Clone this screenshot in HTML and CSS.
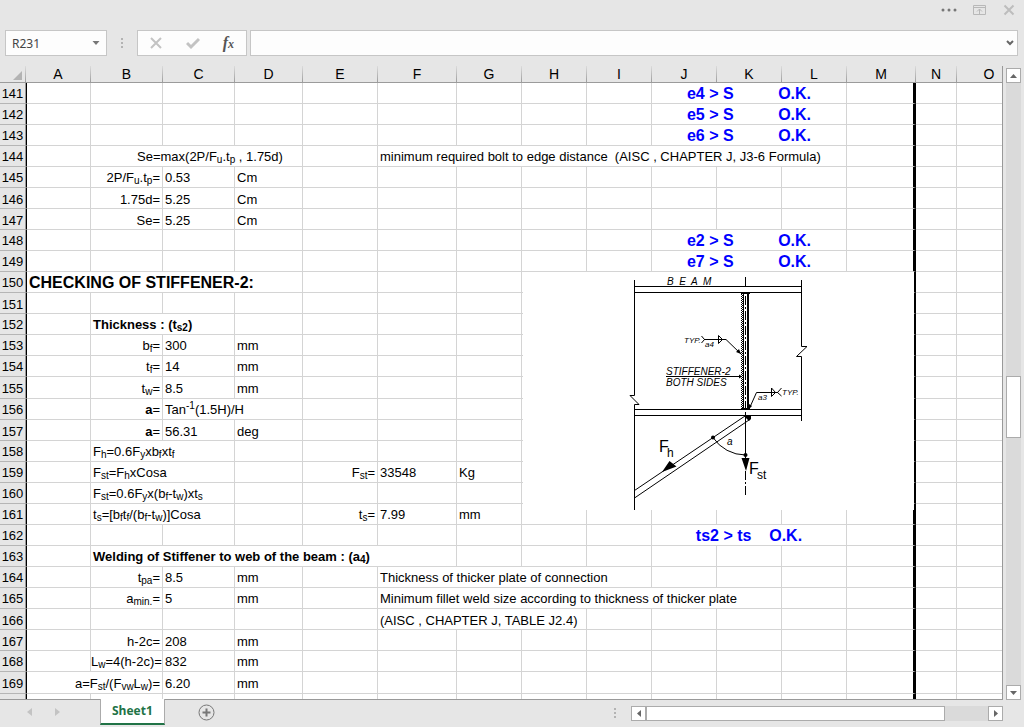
FILE: index.html
```html
<!DOCTYPE html>
<html lang="en">
<head>
    <meta charset="UTF-8">
    <meta name="viewport" content="width=device-width, initial-scale=1.0">
    <title>Sheet1</title>
    <link rel="stylesheet" href="styles.css">
</head>
<body>
    <div class="app">
        <header class="titlebar">
            <button class="icon-btn" aria-label="More"><svg width="16" height="14"><g fill="#777"><circle cx="2" cy="7" r="1.5"/><circle cx="8" cy="7" r="1.5"/><circle cx="14" cy="7" r="1.5"/></g></svg></button>
            <button class="icon-btn" aria-label="Ribbon display options"><svg width="14" height="14" fill="none" stroke="#b8b8b8"><path d="M.5 2.5h12v9H.5zM1 4.5h11M6.5 11V6M4 8.5l2.5-2.5 2.5 2.5"/></svg></button>
            <button class="icon-btn" aria-label="Close"><svg width="12" height="14" fill="none" stroke="#bdbdbd" stroke-width="2"><path d="M1.5 2.5l9 9M10.5 2.5l-9 9"/></svg></button>
        </header>

        <div class="formula-bar">
            <div class="name-box">
                <input type="text" value="R231" aria-label="Name box">
                <button class="icon-btn" aria-label="Open name list"><svg width="8" height="5"><path d="M.5 0h7L4 4z" fill="#777"/></svg></button>
            </div>
            <svg class="grip" width="3" height="11" fill="#b3b3b3"><path d="M0 0h2v2H0zM0 4h2v2H0zM0 8h2v2H0z"/></svg>
            <div class="tools">
                <button class="icon-btn" aria-label="Cancel"><svg width="14" height="14" fill="none" stroke="#c3c3c3" stroke-width="2"><path d="M2 2l10 10M12 2L2 12"/></svg></button>
                <button class="icon-btn" aria-label="Enter"><svg width="14" height="14" fill="none" stroke="#c3c3c3" stroke-width="3"><path d="M1 7l4 4 8-8"/></svg></button>
                <button class="icon-btn fx" aria-label="Insert function">f<small>x</small></button>
            </div>
            <div class="formula">
                <input type="text" aria-label="Formula">
                <button class="icon-btn" aria-label="Expand formula bar"><svg width="8" height="6" fill="none" stroke="#666" stroke-width="2"><path d="M1 1l3 3 3-3"/></svg></button>
            </div>
        </div>

        <main class="workspace">
            <div class="sheet">
                <table>
                    <colgroup>
                        <col class="w26"><col class="w65"><col class="w72"><col class="w72"><col class="w68"><col class="w75"><col class="w79"><col class="w65"><col class="w65"><col class="w65"><col class="w65"><col class="w65"><col class="w65"><col class="w69"><col class="w41"><col class="w65">
                    </colgroup>
                    <thead>
                        <tr><th><svg width="9" height="9"><path d="M9 0v9H0z" fill="#b3b3b3"/></svg></th><th>A</th><th>B</th><th>C</th><th>D</th><th>E</th><th>F</th><th>G</th><th>H</th><th>I</th><th>J</th><th>K</th><th>L</th><th>M</th><th>N</th><th>O</th></tr>
                    </thead>
                    <tbody>
                        <tr><th>141</th><td></td><td></td><td></td><td></td><td></td><td></td><td></td><td></td><td></td><td colspan="3" class="result">e4 &gt; S          O.K.</td><td></td><td></td><td></td></tr>
                        <tr><th>142</th><td></td><td></td><td></td><td></td><td></td><td></td><td></td><td></td><td></td><td colspan="3" class="result">e5 &gt; S          O.K.</td><td></td><td></td><td></td></tr>
                        <tr><th>143</th><td></td><td></td><td></td><td></td><td></td><td></td><td></td><td></td><td></td><td colspan="3" class="result">e6 &gt; S          O.K.</td><td></td><td></td><td></td></tr>
                        <tr><th>144</th><td></td><td colspan="3" class="indent">Se=max(2P/F<sub>u</sub>.t<sub>p</sub> , 1.75d)</td><td></td><td colspan="7">minimum required bolt to edge distance  (AISC , CHAPTER J, J3-6 Formula)</td><td></td><td></td><td></td></tr>
                        <tr><th>145</th><td></td><td class="name">2P/F<sub>u</sub>.t<sub>p</sub>=</td><td>0.53</td><td>Cm</td><td></td><td></td><td></td><td></td><td></td><td></td><td></td><td></td><td></td><td></td><td></td></tr>
                        <tr class="low"><th>146</th><td></td><td class="name">1.75d=</td><td>5.25</td><td>Cm</td><td></td><td></td><td></td><td></td><td></td><td></td><td></td><td></td><td></td><td></td><td></td></tr>
                        <tr class="low"><th>147</th><td></td><td class="name">Se=</td><td>5.25</td><td>Cm</td><td></td><td></td><td></td><td></td><td></td><td></td><td></td><td></td><td></td><td></td><td></td></tr>
                        <tr><th>148</th><td></td><td></td><td></td><td></td><td></td><td></td><td></td><td></td><td></td><td colspan="3" class="result">e2 &gt; S          O.K.</td><td></td><td></td><td></td></tr>
                        <tr><th>149</th><td></td><td></td><td></td><td></td><td></td><td></td><td></td><td></td><td></td><td colspan="3" class="result">e7 &gt; S          O.K.</td><td></td><td></td><td></td></tr>
                        <tr>
                            <th>150</th><td colspan="4" class="heading">CHECKING OF STIFFENER-2:</td><td></td><td></td><td></td>
                            <td class="anchor">
                                <!-- Stiffener detail, floats over H150:M161 -->
                                <svg class="drawing" width="391" height="238" viewBox="0 0 391 238" role="img" aria-label="Stiffener detail">
                                    <g fill="none" stroke="#000">
                                        <path d="M111.5 8V123.5H107L116 132.5H111.5V238"/>
                                        <path d="M278.5 8V74.5H284L273.5 84.5H278.5V149"/>
                                        <path d="M111 14.5H279M111 20.5H279M111 137.5H279M111 143.5H279"/>
                                        <path d="M222.5 5V15"/>
                                        <path d="M222.5 24V136" stroke-dasharray="9 2 2 2"/>
                                        <path d="M222.5 140V188"/>
                                        <path d="M222.5 199V224" stroke-dasharray="9 2 2 2"/>
                                        <path d="M218 21.5H227M218 136.5H227"/>
                                        <path d="M218.5 22V136" stroke-dasharray="1 1"/>
                                        <path d="M219.5 23V136" stroke-dasharray="1 1"/>
                                        <path d="M220.5 21V137"/>
                                        <path d="M225 21V137" stroke-width="2"/>
                                        <path d="M178.5 64L181.5 67.5L178.5 71M181 67.5H203L218 82"/>
                                        <path d="M195.5 63.5V71.5L199.5 67.5z"/>
                                        <path d="M143 104.5H219"/>
                                        <path d="M227 135L233.5 120.5H255M258.5 116L254.5 120.5L258.5 124"/>
                                        <path d="M248.5 116V124.5L252.5 120.5z"/>
                                        <path d="M222 144L111.5 218.5M226 148L111.5 226"/>
                                        <path d="M190 165.5A39 39 0 0 0 222.5 183"/>
                                    </g>
                                    <path d="M139 200L146.5 189L153.5 194.5zM218.5 186H226.5L223 199zM218 82l-5-2 3-3zM219 104.5l-3-2v4zM226 137l0-5 3 2zM221 144h7v3l-2 2z"/>
                                    <circle cx="190" cy="165.5" r="2"/>
                                    <circle cx="222.5" cy="183" r="2"/>
                                    <g class="lettering">
                                        <text x="144" y="13">B  E  A  M</text>
                                        <text x="143" y="103">STIFFENER-2</text>
                                        <text x="143" y="114">BOTH SIDES</text>
                                        <g class="small">
                                            <text x="161" y="71">TYP.</text>
                                            <text x="182" y="75">a4</text>
                                            <text x="259" y="123">TYP.</text>
                                            <text x="235" y="128">a3</text>
                                        </g>
                                        <text x="204" y="173">a</text>
                                    </g>
                                    <g class="force">
                                        <text x="136" y="180">F</text><text x="144" y="185" class="index">h</text>
                                        <text x="226" y="202">F</text><text x="234" y="207" class="index">st</text>
                                    </g>
                                </svg>
                            </td>
                            <td></td><td></td><td></td><td></td><td></td><td></td><td></td>
                        </tr>
                        <tr class="low"><th>151</th><td></td><td></td><td></td><td></td><td></td><td></td><td></td><td></td><td></td><td></td><td></td><td></td><td></td><td></td><td></td></tr>
                        <tr><th>152</th><td></td><td colspan="2" class="subheading">Thickness : (t<sub>s2</sub>)</td><td></td><td></td><td></td><td></td><td></td><td></td><td></td><td></td><td></td><td></td><td></td><td></td></tr>
                        <tr><th>153</th><td></td><td class="name">b<sub>f</sub>=</td><td>300</td><td>mm</td><td></td><td></td><td></td><td></td><td></td><td></td><td></td><td></td><td></td><td></td><td></td></tr>
                        <tr><th>154</th><td></td><td class="name">t<sub>f</sub>=</td><td>14</td><td>mm</td><td></td><td></td><td></td><td></td><td></td><td></td><td></td><td></td><td></td><td></td><td></td></tr>
                        <tr class="tall"><th>155</th><td></td><td class="name">t<sub>w</sub>=</td><td>8.5</td><td>mm</td><td></td><td></td><td></td><td></td><td></td><td></td><td></td><td></td><td></td><td></td><td></td></tr>
                        <tr><th>156</th><td></td><td class="name"><b>a</b>=</td><td colspan="2">Tan<sup>-1</sup>(1.5H)/H</td><td></td><td></td><td></td><td></td><td></td><td></td><td></td><td></td><td></td><td></td><td></td></tr>
                        <tr class="low"><th>157</th><td></td><td class="name"><b>a</b>=</td><td>56.31</td><td>deg</td><td></td><td></td><td></td><td></td><td></td><td></td><td></td><td></td><td></td><td></td><td></td></tr>
                        <tr><th>158</th><td></td><td colspan="2">F<sub>h</sub>=0.6F<sub>y</sub>xb<sub>f</sub>xt<sub>f</sub></td><td></td><td></td><td></td><td></td><td></td><td></td><td></td><td></td><td></td><td></td><td></td><td></td></tr>
                        <tr><th>159</th><td></td><td colspan="2">F<sub>st</sub>=F<sub>h</sub>xCosa</td><td></td><td class="name">F<sub>st</sub>=</td><td>33548</td><td>Kg</td><td></td><td></td><td></td><td></td><td></td><td></td><td></td><td></td></tr>
                        <tr><th>160</th><td></td><td colspan="2">F<sub>st</sub>=0.6F<sub>y</sub>x(b<sub>f</sub>-t<sub>w</sub>)xt<sub>s</sub></td><td></td><td></td><td></td><td></td><td></td><td></td><td></td><td></td><td></td><td></td><td></td><td></td></tr>
                        <tr><th>161</th><td></td><td colspan="2">t<sub>s</sub>=[b<sub>f</sub>t<sub>f</sub>/(b<sub>f</sub>-t<sub>w</sub>)]Cosa</td><td></td><td class="name">t<sub>s</sub>=</td><td>7.99</td><td>mm</td><td></td><td></td><td></td><td></td><td></td><td></td><td></td><td></td></tr>
                        <tr><th>162</th><td></td><td></td><td></td><td></td><td></td><td></td><td></td><td></td><td></td><td colspan="3" class="result">ts2 &gt; ts    O.K.</td><td></td><td></td><td></td></tr>
                        <tr><th>163</th><td></td><td colspan="5" class="subheading">Welding of Stiffener to web of the beam : (a<sub>4</sub>)</td><td></td><td></td><td></td><td></td><td></td><td></td><td></td><td></td><td></td></tr>
                        <tr><th>164</th><td></td><td class="name">t<sub>pa</sub>=</td><td>8.5</td><td>mm</td><td></td><td colspan="4">Thickness of thicker plate of connection</td><td></td><td></td><td></td><td></td><td></td><td></td></tr>
                        <tr><th>165</th><td></td><td class="name">a<sub>min.</sub>=</td><td>5</td><td>mm</td><td></td><td colspan="6">Minimum fillet weld size according to thickness of thicker plate</td><td></td><td></td><td></td><td></td></tr>
                        <tr class="low"><th>166</th><td></td><td></td><td></td><td></td><td></td><td colspan="3">(AISC , CHAPTER J, TABLE J2.4)</td><td></td><td></td><td></td><td></td><td></td><td></td><td></td></tr>
                        <tr class="low"><th>167</th><td></td><td class="name">h-2c=</td><td>208</td><td>mm</td><td></td><td></td><td></td><td></td><td></td><td></td><td></td><td></td><td></td><td></td><td></td></tr>
                        <tr><th>168</th><td></td><td class="name">L<sub>w</sub>=4(h-2c)=</td><td>832</td><td>mm</td><td></td><td></td><td></td><td></td><td></td><td></td><td></td><td></td><td></td><td></td><td></td></tr>
                        <tr class="tall"><th>169</th><td colspan="2" class="name">a=F<sub>st</sub>/(F<sub>vw</sub>L<sub>w</sub>)=</td><td>6.20</td><td>mm</td><td></td><td></td><td></td><td></td><td></td><td></td><td></td><td></td><td></td><td></td><td></td></tr>
                        <tr><th></th><td></td><td></td><td></td><td></td><td></td><td></td><td></td><td></td><td></td><td></td><td></td><td></td><td></td><td></td><td></td></tr>
                    </tbody>
                </table>
            </div>
            <div class="vscroll">
                <button class="arrow" aria-label="Scroll up"><svg width="7" height="4"><path d="M0 4h7L3.5 0z" fill="#666"/></svg></button>
                <div class="track"><div class="thumb"></div></div>
                <button class="arrow" aria-label="Scroll down"><svg width="7" height="4"><path d="M0 0h7L3.5 4z" fill="#666"/></svg></button>
            </div>
        </main>

        <footer class="bottom">
            <nav class="tabs">
                <button class="icon-btn" aria-label="Previous sheet"><svg width="5" height="8"><path d="M5 0v8L0 4z" fill="#c3c3c3"/></svg></button>
                <button class="icon-btn" aria-label="Next sheet"><svg width="5" height="8"><path d="M0 0v8l5-4z" fill="#c3c3c3"/></svg></button>
                <a class="tab" href="#">Sheet1</a>
                <button class="icon-btn add" aria-label="New sheet"><svg width="17" height="17" fill="none" stroke="#777"><circle cx="8.5" cy="8.5" r="7.5"/><path d="M4.5 8.5h8M8.5 4.5v8" stroke-width="2"/></svg></button>
            </nav>
            <svg class="grip" width="3" height="11" fill="#b3b3b3"><path d="M0 0h2v2H0zM0 4h2v2H0zM0 8h2v2H0z"/></svg>
            <div class="hscroll">
                <button class="arrow" aria-label="Scroll left"><svg width="4" height="7"><path d="M4 0v7L0 3.5z" fill="#666"/></svg></button>
                <div class="track"><div class="thumb"></div></div>
                <button class="arrow" aria-label="Scroll right"><svg width="4" height="7"><path d="M0 0v7l4-3.5z" fill="#666"/></svg></button>
            </div>
        </footer>
    </div>
</body>
</html>
```
FILE: styles.css
```css
* {
    box-sizing: border-box;
}
body {
    margin: 0;
    background: #e6e6e6;
    color: #000;
    font-family: "Liberation Sans", Arial, sans-serif;
    font-size: 13px;
}
.app {
    display: flex;
    flex-direction: column;
    height: 100vh;
}
.icon-btn {
    display: flex;
    align-items: center;
    justify-content: center;
    padding: 0;
    border: none;
    background: none;
}

/* Title bar */
.titlebar {
    display: flex;
    justify-content: flex-end;
    align-items: flex-start;
    gap: 16px;
    height: 30px;
    padding: 3px 9px 0 0;
}

/* Formula bar */
.formula-bar {
    display: flex;
    align-items: center;
    height: 26px;
    margin-bottom: 10px;
    padding: 0 6px 0 5px;
}
.name-box,
.tools,
.formula {
    display: flex;
    align-items: center;
    height: 26px;
    border: 1px solid #c6c6c6;
    background: #fdfdfd;
}
.name-box {
    width: 102px;
    padding: 0 6px;
}
.formula-bar input {
    flex: 1;
    min-width: 0;
    padding: 0;
    border: none;
    outline: none;
    background: none;
    color: #444;
    font-family: "Noto Sans", "Open Sans", sans-serif;
    font-size: 12px;
}
.formula-bar .grip {
    margin: 0 13px 0 14px;
}
.tools {
    justify-content: space-between;
    width: 110px;
    margin-right: 3px;
    padding: 0 12px 0 11px;
}
.fx {
    align-items: baseline;
    color: #555;
    font-family: "Liberation Serif", serif;
    font-size: 16px;
    font-style: italic;
    font-weight: bold;
}
.fx small {
    font-size: 12px;
}
.formula {
    flex: 1;
    padding: 0 3px;
}

/* Grid */
.workspace {
    display: flex;
    flex: 1;
    min-height: 0;
    gap: 3px;
    padding-right: 3px;
}
.sheet {
    flex: 1;
    min-width: 0;
    overflow: hidden;
    border-bottom: 1px solid #999;
    border-right: 1px solid #999;
    background: #fff;
}
table {
    width: 0;
    table-layout: fixed;
    border-collapse: separate;
    border-spacing: 0;
}
.w26 { width: 26px; }
.w41 { width: 41px; }
.w65 { width: 65px; }
.w68 { width: 68px; }
.w69 { width: 69px; }
.w72 { width: 72px; }
.w75 { width: 75px; }
.w79 { width: 79px; }
tr {
    height: 21px;
}
.tall {
    height: 22px;
}
th,
td {
    padding: 2px 2px 0;
    line-height: 16px;
    white-space: pre;
}
th {
    padding: 2px 0 0;
    border-right: 1px solid #999;
    border-bottom: 1px solid #b5b5b5;
    background: #e6e6e6;
    font-weight: normal;
}
thead tr {
    height: 17px;
}
thead th {
    padding: 0;
    border-right: 1px solid;
    border-bottom: 1px solid #999;
    border-image: linear-gradient(#e0e0e0, #999) 1;
    font-size: 14px;
}
thead svg {
    display: block;
    margin: 3px 3px 0 auto;
}
td {
    border-right: 1px solid #d4d4d4;
    border-bottom: 1px solid #d4d4d4;
}
td:first-of-type {
    border-left: 1px solid #000;
}
td:nth-last-child(3) {
    border-right: 3px solid #000;
}
.low th,
.low td {
    padding-top: 4px;
}
sub,
sup {
    font-size: 10px;
    line-height: 0;
}
sub {
    vertical-align: -2px;
}
.name {
    padding-left: 0;
    text-align: right;
}
.indent {
    padding-left: 46px;
}
.heading {
    font-size: 16px;
    font-weight: bold;
}
.subheading {
    font-weight: bold;
}
.result {
    color: #0000ff;
    font-size: 16px;
    font-weight: bold;
    text-align: center;
}

/* Drawing */
.anchor {
    position: relative;
    white-space: normal;
}
.drawing {
    position: absolute;
    top: 0;
    left: 1px;
    background: #fff;
}
.lettering {
    font-size: 10px;
    font-style: italic;
}
.lettering text {
    white-space: pre;
}
.lettering .small {
    font-size: 8px;
}
.force {
    font-size: 16px;
}
.force .index {
    font-size: 12px;
}

/* Scroll bars */
.vscroll,
.hscroll {
    display: flex;
}
.vscroll {
    flex-direction: column;
    width: 15px;
    padding-top: 2px;
}
.arrow {
    display: flex;
    align-items: center;
    justify-content: center;
    width: 15px;
    height: 15px;
    padding: 0;
    border: 1px solid #ababab;
    background: #fff;
}
.track {
    display: flex;
    flex: 1;
    background: #dadada;
}
.thumb {
    border: 1px solid #ababab;
    background: #fff;
}
.vscroll .track {
    flex-direction: column;
    padding-top: 293px;
}
.vscroll .thumb {
    height: 62px;
}
.hscroll {
    width: 372px;
}
.hscroll .thumb {
    width: 299px;
}

/* Sheet tabs */
.bottom {
    display: flex;
    align-items: center;
    height: 27px;
    padding-right: 21px;
}
.tabs {
    display: flex;
    flex: 1;
    align-self: flex-start;
    align-items: center;
    gap: 23px;
    margin-top: -1px;
    padding-left: 27px;
}
.tab {
    margin-left: 17px;
    padding: 0 11px;
    border: 1px solid #ababab;
    border-top: none;
    border-bottom: 2px solid #217346;
    background: #fff;
    color: #217346;
    font-family: "Open Sans", "Noto Sans", sans-serif;
    font-size: 12px;
    font-weight: bold;
    line-height: 24px;
    text-decoration: none;
}
.add {
    margin-left: 10px;
}
.bottom .grip {
    margin-right: 14px;
}
```
